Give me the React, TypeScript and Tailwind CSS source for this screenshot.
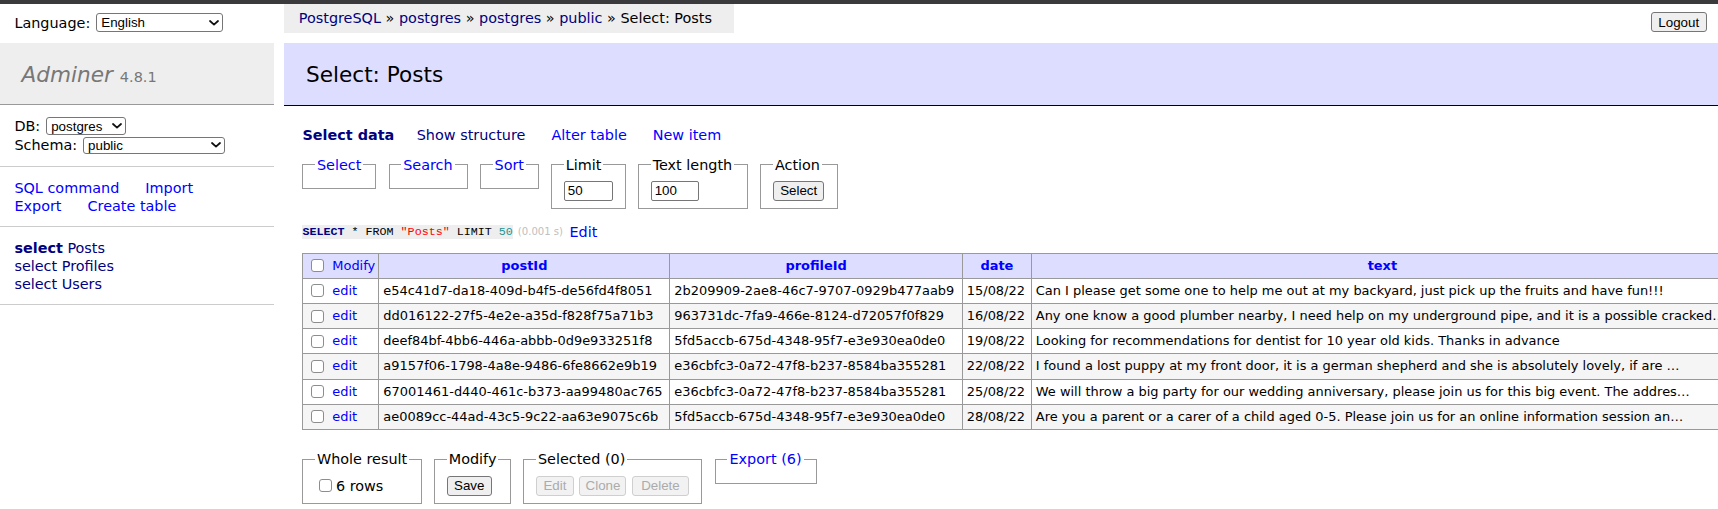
import React from 'react';

const rows = [
  {
    postId: 'e54c41d7-da18-409d-b4f5-de56fd4f8051',
    profileId: '2b209909-2ae8-46c7-9707-0929b477aab9',
    date: '15/08/22',
    text: 'Can I please get some one to help me out at my backyard, just pick up the fruits and have fun!!!',
  },
  {
    postId: 'dd016122-27f5-4e2e-a35d-f828f75a71b3',
    profileId: '963731dc-7fa9-466e-8124-d72057f0f829',
    date: '16/08/22',
    text: 'Any one know a good plumber nearby, I need help on my underground pipe, and it is a possible cracked…',
  },
  {
    postId: 'deef84bf-4bb6-446a-abbb-0d9e933251f8',
    profileId: '5fd5accb-675d-4348-95f7-e3e930ea0de0',
    date: '19/08/22',
    text: 'Looking for recommendations for dentist for 10 year old kids. Thanks in advance',
  },
  {
    postId: 'a9157f06-1798-4a8e-9486-6fe8662e9b19',
    profileId: 'e36cbfc3-0a72-47f8-b237-8584ba355281',
    date: '22/08/22',
    text: 'I found a lost puppy at my front door, it is a german shepherd and she is absolutely lovely, if are …',
  },
  {
    postId: '67001461-d440-461c-b373-aa99480ac765',
    profileId: 'e36cbfc3-0a72-47f8-b237-8584ba355281',
    date: '25/08/22',
    text: 'We will throw a big party for our wedding anniversary, please join us for this big event. The addres…',
  },
  {
    postId: 'ae0089cc-44ad-43c5-9c22-aa63e9075c6b',
    profileId: '5fd5accb-675d-4348-95f7-e3e930ea0de0',
    date: '28/08/22',
    text: 'Are you a parent or a carer of a child aged 0-5. Please join us for an online information session an…',
  },
];

const Chevron = () => (
  <svg width="10" height="6" viewBox="0 0 10 6" className="shrink-0">
    <path d="M1 1l4 3.6L9 1" stroke="#111" strokeWidth="1.8" fill="none" strokeLinecap="round" strokeLinejoin="round" />
  </svg>
);

const FakeSelect = ({ value, className }: { value: string; className: string }) => (
  <span
    className={`inline-flex items-center justify-between border border-[#767676] rounded-[3px] bg-white pl-[4px] pr-[3px] text-[13.33px] leading-none text-black font-['Liberation_Sans',Arial,sans-serif] ${className}`}
  >
    <span>{value}</span>
    <Chevron />
  </span>
);

const Checkbox = ({ className = '' }: { className?: string }) => (
  <span className={`inline-block shrink-0 w-[13px] h-[13px] border border-[#8d8d8d] rounded-[3px] bg-white ${className}`} />
);

const Btn = ({ label, disabled = false, className = '' }: { label: string; disabled?: boolean; className?: string }) => (
  <button
    type="button"
    className={`inline-flex items-center justify-center h-[20px] px-[7px] rounded-[3px] border text-[13.33px] leading-none font-['Liberation_Sans',Arial,sans-serif] ${
      disabled ? 'border-[#cfcfcf] bg-[#f2f2f2] text-[#ababab]' : 'border-[#767676] bg-[#efefef] text-black'
    } ${className}`}
  >
    {label}
  </button>
);

export default function App() {
  return (
    <div className="w-[1718px] h-[509px] overflow-hidden bg-white text-black text-[14.4px] leading-[18px] font-['DejaVu_Sans',Verdana,sans-serif]">
      {/* browser chrome edge */}
      <div className="h-[4px] bg-[#3a3a3c]"></div>

      <div className="flex">
        {/* Menu */}
        <div className="w-[274px] shrink-0">
          <div className="h-[37px] flex items-center px-[14.4px] gap-[6px]">
            <span>Language:</span>
            <FakeSelect value="English" className="w-[127px] h-[18.5px]" />
          </div>
          <h1 className="mt-[2.3px] h-[62px] bg-[#eee] border-b border-[#999] px-[21.6px] py-[17.28px] text-[21.6px] leading-[27px] whitespace-nowrap">
            <span className="italic text-[#777]">Adminer</span>{' '}
            <span className="text-[#777] text-[14.47px] leading-none">4.8.1</span>
          </h1>
          <div className="px-[14.4px] py-[11.5px] border-b border-[#ccc]">
            <div className="h-[19px] flex items-center gap-[6px]">
              <span>DB:</span>
              <FakeSelect value="postgres" className="w-[80px] h-[18px]" />
            </div>
            <div className="h-[19px] flex items-center gap-[6px]">
              <span>Schema:</span>
              <FakeSelect value="public" className="w-[142px] h-[17.5px]" />
            </div>
          </div>
          <div className="px-[14.4px] py-[11.5px] border-b border-[#ccc] text-[#0000ff]">
            <div className="flex gap-[26px]">
              <span>SQL command</span>
              <span>Import</span>
            </div>
            <div className="flex gap-[26px]">
              <span>Export</span>
              <span>Create table</span>
            </div>
          </div>
          <div className="px-[14.4px] py-[11.5px] border-b border-[#ccc] text-[#000080]">
            <div>
              <span className="font-bold">select</span> Posts
            </div>
            <div>select Profiles</div>
            <div>select Users</div>
          </div>
        </div>

        {/* Content */}
        <div className="flex-1 min-w-0 pl-[10.4px]">
          <div className="h-[39.3px] flex items-start">
            <div className="w-[450px] h-[28.8px] leading-[28.8px] bg-[#eee] px-[14.4px] whitespace-nowrap">
              <span className="text-[#000080]">PostgreSQL</span> »{' '}
              <span className="text-[#000080]">postgres</span> »{' '}
              <span className="text-[#000080]">postgres</span> »{' '}
              <span className="text-[#000080]">public</span> » Select: Posts
            </div>
            <Btn label="Logout" className="ml-auto mt-[8.3px] mr-[11.3px] w-[56px]" />
          </div>

          <h2 className="bg-[#ddf] border-b border-black px-[21.6px] py-[17.28px] text-[21.6px] leading-[27px] font-normal">
            Select: Posts
          </h2>

          <div className="pl-[18px]">
            <div className="mt-[20.4px] h-[18px] flex items-center whitespace-nowrap">
              <span className="font-bold text-[#000080] mr-[22.5px]">Select data</span>
              <span className="text-[#000080] mr-[26px]">Show structure</span>
              <span className="text-[#0000ff] mr-[26px]">Alter table</span>
              <span className="text-[#0000ff]">New item</span>
            </div>

            <div className="mt-[11.5px] flex items-start gap-[12.3px]">
              <fieldset className="w-[74px] border border-[#999] px-[11.52px] py-[7.2px]">
                <legend className="px-[2px] text-[#0000ff]">Select</legend>
              </fieldset>
              <fieldset className="w-[79px] border border-[#999] px-[11.52px] py-[7.2px]">
                <legend className="px-[2px] text-[#0000ff]">Search</legend>
              </fieldset>
              <fieldset className="w-[59px] border border-[#999] px-[11.52px] py-[7.2px]">
                <legend className="px-[2px] text-[#0000ff]">Sort</legend>
              </fieldset>
              <fieldset className="w-[73.5px] border border-[#999] px-[11.52px] py-[7.2px]">
                <legend className="px-[2px]">Limit</legend>
                <input
                  type="text"
                  readOnly
                  defaultValue="50"
                  className="block w-[49.5px] h-[20px] border border-[#767676] rounded-[2px] px-[3px] text-[13.33px] font-['Liberation_Sans',Arial,sans-serif] bg-white"
                />
              </fieldset>
              <fieldset className="w-[110px] border border-[#999] px-[11.52px] py-[7.2px]">
                <legend className="px-[2px] whitespace-nowrap">Text length</legend>
                <input
                  type="text"
                  readOnly
                  defaultValue="100"
                  className="block w-[48px] h-[20px] border border-[#767676] rounded-[2px] px-[3px] text-[13.33px] font-['Liberation_Sans',Arial,sans-serif] bg-white"
                />
              </fieldset>
              <fieldset className="w-[77.5px] border border-[#999] px-[11.52px] py-[7.2px]">
                <legend className="px-[2px]">Action</legend>
                <Btn label="Select" className="w-[51.5px]" />
              </fieldset>
            </div>

            <div className="mt-[13.5px] h-[18px] flex items-center whitespace-nowrap">
              <code className="bg-[#eee] text-[11.7px] leading-[14px] font-['Liberation_Mono',monospace] whitespace-pre">
                <span className="font-bold text-[#000080]">SELECT</span> * FROM{' '}
                <span className="text-[#ff0000]">"Posts"</span> LIMIT{' '}
                <span className="text-[#1a9494]">50</span>
              </code>
              <span className="ml-[5px] text-[10.08px] text-[#c0c0c0]">(0.001 s)</span>
              <span className="ml-[6.5px] text-[#0000ff]">Edit</span>
            </div>

            <table className="mt-[12px] table-fixed border-collapse border-t border-l border-[#999] text-[12.96px] leading-[16.2px] w-[1431px]">
              <colgroup>
                <col className="w-[76px]" />
                <col className="w-[291px]" />
                <col className="w-[292.5px]" />
                <col className="w-[69px]" />
                <col className="w-[702px]" />
              </colgroup>
              <thead>
                <tr className="h-[25.2px] bg-[#ddf]">
                  <td className="border-r border-b border-[#999] px-[3.9px] py-0">
                    <div className="flex items-center">
                      <Checkbox className="ml-[4px] mr-[8px]" />
                      <span className="text-[#0000ff]">Modify</span>
                    </div>
                  </td>
                  {['postId', 'profileId', 'date', 'text'].map((h) => (
                    <th
                      key={h}
                      className="border-r border-b border-[#999] px-[6.5px] py-0 text-center font-bold text-[#0000ff] whitespace-nowrap"
                    >
                      {h}
                    </th>
                  ))}
                </tr>
              </thead>
              <tbody>
                {rows.map((r, i) => (
                  <tr key={r.postId} className={`h-[25.2px] ${i % 2 === 1 ? 'bg-[#f5f5f5]' : 'bg-white'}`}>
                    <td className="border-r border-b border-[#999] px-[3.9px] py-0">
                      <div className="flex items-center">
                        <Checkbox className="ml-[4px] mr-[8px]" />
                        <span className="text-[#0000ff]">edit</span>
                      </div>
                    </td>
                    <td className="border-r border-b border-[#999] px-[3.9px] py-0 whitespace-nowrap overflow-hidden">{r.postId}</td>
                    <td className="border-r border-b border-[#999] px-[3.9px] py-0 whitespace-nowrap overflow-hidden">{r.profileId}</td>
                    <td className="border-r border-b border-[#999] px-[3.9px] py-0 whitespace-nowrap overflow-hidden">{r.date}</td>
                    <td className="border-r border-b border-[#999] px-[3.9px] py-0 whitespace-nowrap overflow-hidden">{r.text}</td>
                  </tr>
                ))}
              </tbody>
            </table>

            <div className="mt-[20.5px] flex items-start gap-[12.5px]">
              <fieldset className="w-[119px] border border-[#999] px-[11.52px] py-[7.2px]">
                <legend className="px-[2px] whitespace-nowrap">Whole result</legend>
                <div className="h-[20.5px] flex items-center whitespace-nowrap">
                  <Checkbox className="ml-[4px] mr-[4px] w-[12px] h-[12px] rounded-[2px]" />
                  <span>6 rows</span>
                </div>
              </fieldset>
              <fieldset className="w-[76px] border border-[#999] px-[11.52px] py-[7.2px]">
                <legend className="px-[2px]">Modify</legend>
                <Btn label="Save" className="w-[45px] h-[20.5px]" />
              </fieldset>
              <fieldset className="w-[179px] border border-[#999] px-[11.52px] py-[7.2px]">
                <legend className="px-[2px] whitespace-nowrap">Selected (0)</legend>
                <div className="flex gap-[5.5px]">
                  <Btn label="Edit" disabled className="w-[38px] h-[20px]" />
                  <Btn label="Clone" disabled className="w-[47px] h-[20px]" />
                  <Btn label="Delete" disabled className="w-[57px] h-[20px]" />
                </div>
              </fieldset>
              <fieldset className="w-[102.5px] border border-[#999] px-[11.52px] py-[7.2px]">
                <legend className="px-[2px] whitespace-nowrap text-[#0000ff]">Export (6)</legend>
              </fieldset>
            </div>
          </div>
        </div>
      </div>
    </div>
  );
}
